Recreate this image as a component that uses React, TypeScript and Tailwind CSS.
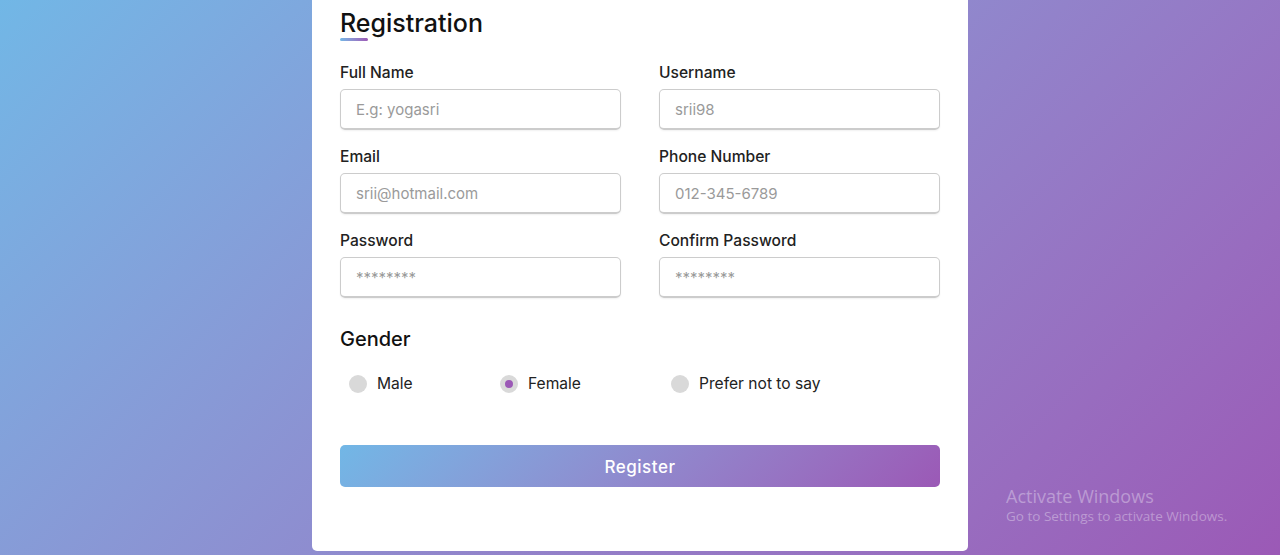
const fields = [
  { label: "Full Name", placeholder: "E.g: yogasri" },
  { label: "Username", placeholder: "srii98" },
  { label: "Email", placeholder: "srii@hotmail.com" },
  { label: "Phone Number", placeholder: "012-345-6789" },
  { label: "Password", placeholder: "********" },
  { label: "Confirm Password", placeholder: "********" },
];

const genders = [
  { label: "Male", width: "w-[151px]", checked: false },
  { label: "Female", width: "w-[171px]", checked: true },
  { label: "Prefer not to say", width: "", checked: false },
];

const App = () => {
  return (
    <div className="relative h-[555px] w-full overflow-hidden bg-linear-135 from-[#71b7e6] to-[#9b59b6] font-['Inter',sans-serif]">
      <div className="mx-auto flex h-[551px] w-[656px] flex-col rounded-b-[5px] bg-white px-[28px]">
        <h1 className="mt-[8px] h-[30px] text-[25px] leading-[30px] font-medium text-[#111]">
          Registration
        </h1>
        <div className="h-[3px] w-[28px] rounded-sm bg-linear-to-r from-[#71b7e6] to-[#9b59b6]" />

        <div className="mt-[21px] grid grid-cols-2 gap-x-[38px] gap-y-[16px]">
          {fields.map((f) => (
            <div key={f.label} className="flex flex-col">
              <label className="mb-[5px] h-[22px] text-[15.6px] leading-[22px] font-medium text-[#222]">
                {f.label}
              </label>
              <input
                placeholder={f.placeholder}
                className="h-[41px] w-full rounded-[5px] border border-b-2 border-[#ccc] px-[15px] text-[15px] shadow-[0_1px_2px_rgba(0,0,0,0.06)] outline-none placeholder:text-[#9a9a9a]"
              />
            </div>
          ))}
        </div>

        <h2 className="mt-[26px] h-[30px] text-[20px] leading-[30px] font-medium text-[#111]">
          Gender
        </h2>
        <div className="mt-[18px] flex h-[24px] items-center pl-[9px]">
          {genders.map((g) => (
            <label key={g.label} className={`flex items-center ${g.width}`}>
              {g.checked ? (
                <span className="mr-[10px] h-[18px] w-[18px] rounded-full border-[5px] border-[#d9d9d9] bg-[#9b59b6]" />
              ) : (
                <span className="mr-[10px] h-[18px] w-[18px] rounded-full bg-[#d9d9d9]" />
              )}
              <span className="text-[15.6px] text-[#222]">{g.label}</span>
            </label>
          ))}
        </div>

        <button className="mt-[49px] h-[42px] w-full rounded-[5px] bg-linear-135 from-[#71b7e6] to-[#9b59b6] text-[17px] leading-[44px] font-medium tracking-[0.5px] text-white">
          Register
        </button>
      </div>

      <div className="absolute top-[485px] left-[1006px] font-['Open_Sans',sans-serif] text-white/35">
        <div className="text-[18px] leading-[22px]">Activate Windows</div>
        <div className="text-[13.5px] leading-[18px]">Go to Settings to activate Windows.</div>
      </div>
    </div>
  );
};

export default App;
